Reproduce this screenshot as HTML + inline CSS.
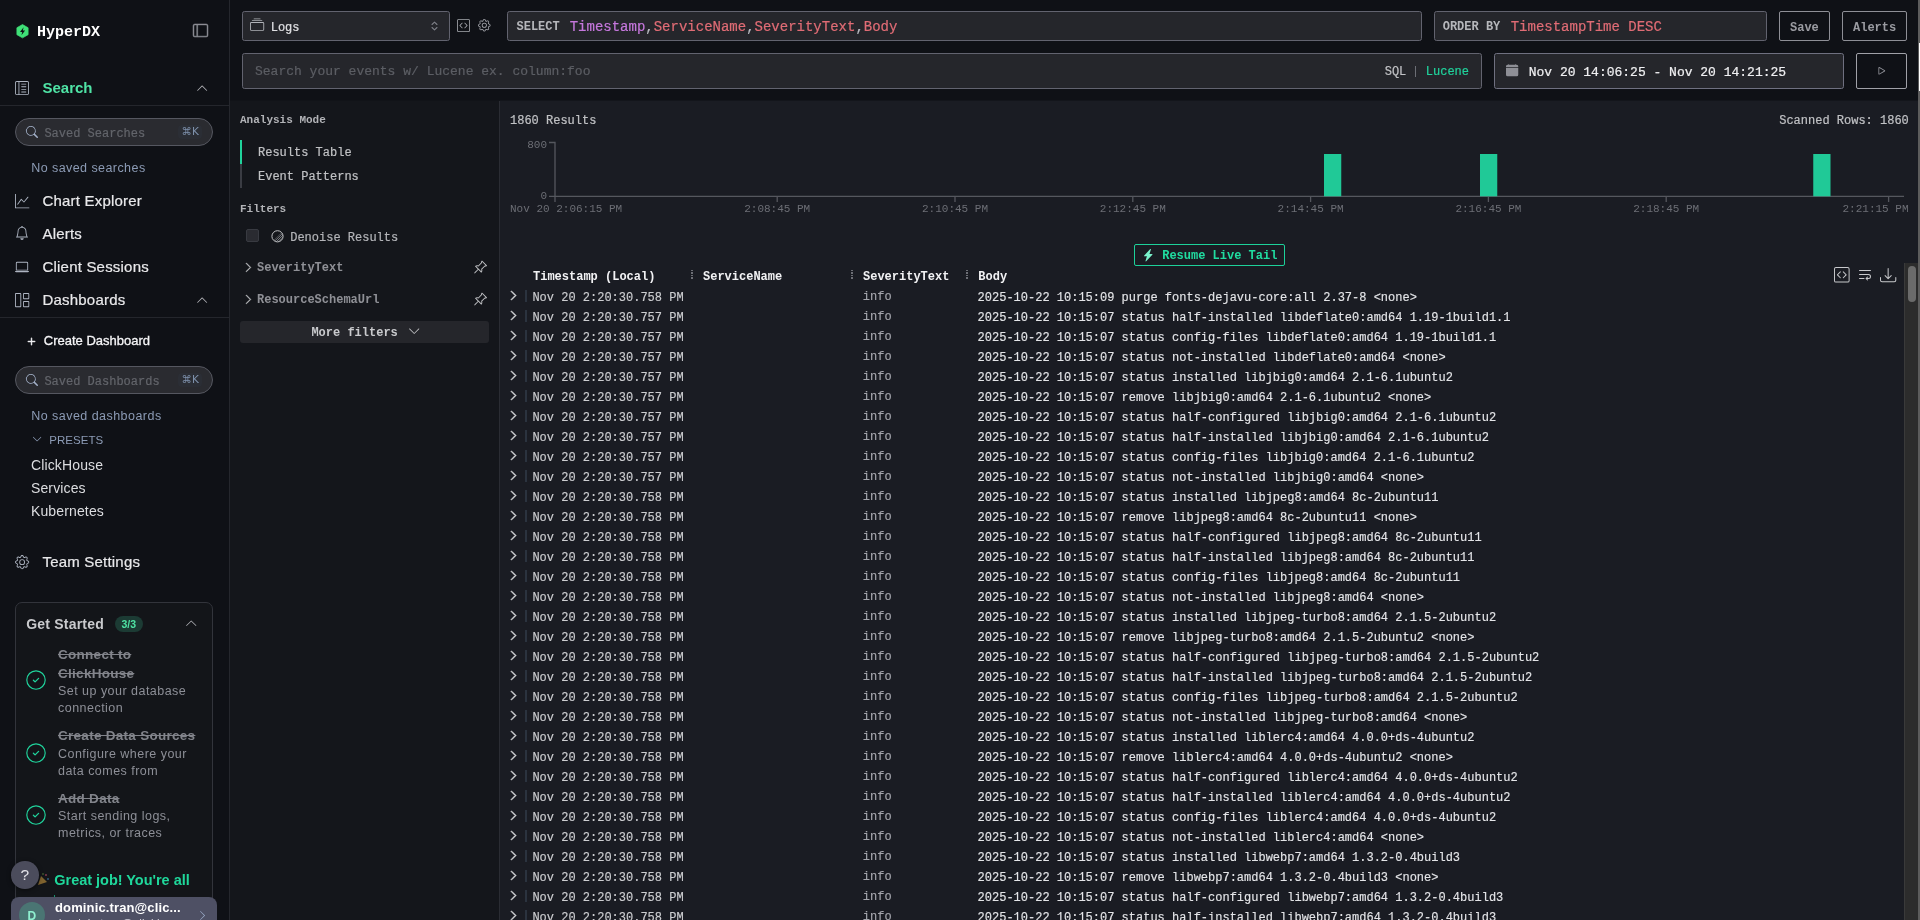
<!DOCTYPE html>
<html lang="en"><head><meta charset="utf-8"><title>HyperDX Search</title>
<style>
html,body{margin:0;padding:0;background:#0f1116;}
body{width:1920px;height:920px;overflow:hidden;position:relative;}
#app{position:absolute;left:0;top:0;width:1920px;height:920px;overflow:hidden;will-change:transform;}
.b,.t,.ic{position:absolute;box-sizing:border-box;}
.t{line-height:1;white-space:pre;}
.m{font-family:"Liberation Mono",monospace;-webkit-text-stroke-width:0.2px;}
.m.bd{-webkit-text-stroke-width:0;}
.s{font-family:"Liberation Sans",sans-serif;}
.bd{font-weight:bold;}
.st{text-decoration:line-through;}
.ic{display:block;overflow:visible;}
.rows{position:absolute;left:500px;top:287px;width:1404px;height:633px;overflow:hidden;font-family:"Liberation Mono",monospace;font-size:12px;line-height:20px;white-space:pre;}
.r{position:absolute;left:0;height:20px;width:1404px;}
.r svg{position:absolute;left:7.6px;top:3.4px;width:11px;height:11px;color:#d4d5d8;stroke:#dcdde0;stroke-width:1.2;color:#dcdde0;}
.r i{position:absolute;left:25px;top:3.4px;width:2px;height:11.5px;background:#2b333f;}
.r span{position:absolute;top:0.6px;}
.c1{left:32.4px;color:#cdced1;-webkit-text-stroke:0.14px #cdced1;}
.c2{left:362.8px;color:#a4a5ac;top:-0.5px !important;-webkit-text-stroke:0.15px #a4a5ac;}
.c3{left:477.6px;color:#e4e5e8;-webkit-text-stroke:0.14px #e4e5e8;}
</style></head>
<body>
<div id="app">
<div class="b" style="left:0px;top:0px;width:1920px;height:920px;background:#0f1116;"></div>
<div class="b" style="left:230px;top:100px;width:270px;height:820px;background:#14161b;"></div>
<div class="b" style="left:500px;top:100px;width:1418px;height:820px;background:#1a1c23;"></div>
<div class="b" style="left:230px;top:100px;width:270px;height:1px;background:#111318;"></div>
<div class="b" style="left:500px;top:100px;width:1418px;height:1px;background:#13151b;"></div>
<div class="b" style="left:499px;top:101px;width:1px;height:819px;background:#2a2c33;"></div>
<div class="b" style="left:229px;top:0px;width:1px;height:920px;background:#25272d;"></div>
<div class="b" style="left:1918px;top:0px;width:2px;height:920px;background:#5c5c5c;"></div>
<div class="b" style="left:1918.7px;top:43px;width:1.3px;height:48px;background:#ffffff;"></div>
<svg class="ic" style="left:15.5px;top:23.6px;width:13px;height:14.7px" viewBox="0 0 14 16"><path d="M7 0.6 L13.1 4.1 L13.1 11.6 L7 15.1 L0.9 11.6 L0.9 4.1 Z" fill="#3fe077" stroke="#3fe077" stroke-width="0.8" stroke-linejoin="round"/><path d="M8.2 3.6 L4.3 8.6 L6.7 8.6 L5.9 12.2 L9.8 7.1 L7.4 7.1 Z" fill="#0f1116"/></svg>
<div class="t m bd" style="left:37px;top:24.75px;font-size:15px;color:#ffffff;">HyperDX</div>
<svg class="ic" style="left:193px;top:23.2px;width:15px;height:15px;color:#8e8f96;stroke:#8e8f96;stroke-width:0.5;" viewBox="0 0 16 16" fill="currentColor"><path d="M0 3a2 2 0 0 1 2-2h12a2 2 0 0 1 2 2v10a2 2 0 0 1-2 2H2a2 2 0 0 1-2-2V3zm5-1v12h9a1 1 0 0 0 1-1V3a1 1 0 0 0-1-1H5zM4 2H2a1 1 0 0 0-1 1v10a1 1 0 0 0 1 1h2V2z"/></svg>
<svg class="ic" style="left:15px;top:81px;width:14px;height:14px;color:#aeb5c2;" viewBox="0 0 16 16" fill="currentColor"><path d="M12.5 3a.5.5 0 0 1 0 1h-5a.5.5 0 0 1 0-1h5zm0 3a.5.5 0 0 1 0 1h-5a.5.5 0 0 1 0-1h5zm.5 3.5a.5.5 0 0 0-.5-.5h-5a.5.5 0 0 0 0 1h5a.5.5 0 0 0 .5-.5zm-.5 2.5a.5.5 0 0 1 0 1h-5a.5.5 0 0 1 0-1h5z"/><path d="M0 2a2 2 0 0 1 2-2h12a2 2 0 0 1 2 2v12a2 2 0 0 1-2 2H2a2 2 0 0 1-2-2V2zM4 1H2a1 1 0 0 0-1 1v12a1 1 0 0 0 1 1h2V1zm1 0v14h9a1 1 0 0 0 1-1V2a1 1 0 0 0-1-1H5z"/></svg>
<div class="t s bd" style="left:42.5px;top:80.40px;font-size:15px;color:#4fe3a5;">Search</div>
<svg class="ic" style="left:195.85px;top:81.9px;width:12.3px;height:12.3px;color:#b0b1b6;" viewBox="0 0 16 16" fill="currentColor"><path fill-rule="evenodd" d="M7.646 4.646a.5.5 0 0 1 .708 0l6 6a.5.5 0 0 1-.708.708L8 5.707l-5.646 5.647a.5.5 0 0 1-.708-.708l6-6z"/></svg>
<div class="b" style="left:0px;top:105px;width:229px;height:1px;background:#24262c;"></div>
<div class="b" style="left:15px;top:118px;width:198px;height:28px;background:#2a2b30;border:1px solid #555760;border-radius:14px;"></div>
<svg class="ic" style="left:25.6px;top:126.2px;width:12px;height:12px;color:#a3b1c9;" viewBox="0 0 16 16" fill="currentColor"><path d="M11.742 10.344a6.5 6.5 0 1 0-1.397 1.398h-.001c.03.04.062.078.098.115l3.85 3.85a1 1 0 0 0 1.415-1.414l-3.85-3.85a1.007 1.007 0 0 0-.115-.1zM12 6.5a5.5 5.5 0 1 1-11 0 5.5 5.5 0 0 1 11 0z"/></svg>
<div class="t m" style="left:44.4px;top:128.00px;font-size:12px;color:#63656b;">Saved Searches</div>
<div class="b" style="left:178px;top:125px;width:24px;height:14px;background:#2b2e35;border-radius:4px;"></div>
<div class="t s" style="left:181.5px;top:126.09px;font-size:11px;color:#7f92ad;font-family:'DejaVu Sans','Liberation Sans',sans-serif;font-size:10.5px;">⌘K</div>
<div class="t s" style="left:31.25px;top:161.62px;font-size:12.5px;color:#8c9bb5;letter-spacing:0.43px;">No saved searches</div>
<svg class="ic" style="left:14.75px;top:193.5px;width:14.3px;height:14.3px;color:#aeb5c2;" viewBox="0 0 16 16" fill="currentColor"><path fill-rule="evenodd" d="M0 0h1v15h15v1H0V0Zm14.817 3.113a.5.5 0 0 1 .07.704l-4.5 5.5a.5.5 0 0 1-.74.037L7.06 6.767l-3.656 5.027a.5.5 0 0 1-.808-.588l4-5.5a.5.5 0 0 1 .758-.06l2.609 2.61 4.15-5.073a.5.5 0 0 1 .704-.07Z"/></svg>
<div class="t s" style="left:42.5px;top:192.90px;font-size:15px;color:#e9e9eb;letter-spacing:0.2px;-webkit-text-stroke:0.2px #e9e9eb;">Chart Explorer</div>
<svg class="ic" style="left:15px;top:226.3px;width:14px;height:14px;color:#aeb5c2;" viewBox="0 0 16 16" fill="currentColor"><path d="M8 16a2 2 0 0 0 2-2H6a2 2 0 0 0 2 2zM8 1.918l-.797.161A4.002 4.002 0 0 0 4 6c0 .628-.134 2.197-.459 3.742-.16.767-.376 1.566-.663 2.258h10.244c-.287-.692-.502-1.49-.663-2.258C12.134 8.197 12 6.628 12 6a4.002 4.002 0 0 0-3.203-3.92L8 1.917zM14.22 12c.223.447.481.801.78 1H1c.299-.199.557-.553.78-1C2.68 10.2 3 6.88 3 6c0-2.42 1.72-4.44 4.005-4.901a1 1 0 1 1 1.99 0A5.002 5.002 0 0 1 13 6c0 .88.32 4.2 1.22 6z"/></svg>
<div class="t s" style="left:42.5px;top:225.90px;font-size:15px;color:#e9e9eb;letter-spacing:0.2px;-webkit-text-stroke:0.2px #e9e9eb;">Alerts</div>
<svg class="ic" style="left:15px;top:260px;width:14px;height:14px;color:#aeb5c2;" viewBox="0 0 16 16" fill="currentColor"><path d="M13.5 3a.5.5 0 0 1 .5.5V11H2V3.5a.5.5 0 0 1 .5-.5h11zm-11-1A1.5 1.5 0 0 0 1 3.5V12h14V3.5A1.5 1.5 0 0 0 13.5 2h-11zM0 12.5h16a1.5 1.5 0 0 1-1.5 1.5h-13A1.5 1.5 0 0 1 0 12.5z"/></svg>
<div class="t s" style="left:42.5px;top:259.05px;font-size:15px;color:#e9e9eb;letter-spacing:0.2px;-webkit-text-stroke:0.2px #e9e9eb;">Client Sessions</div>
<svg class="ic" style="left:15px;top:293px;width:14.25px;height:14.25px;color:#aeb5c2;" viewBox="0 0 16 16" fill="currentColor"><path d="M6 1H1v14h5V1zm9 0h-5v5h5V1zm0 9v5h-5v-5h5zM0 1a1 1 0 0 1 1-1h5a1 1 0 0 1 1 1v14a1 1 0 0 1-1 1H1a1 1 0 0 1-1-1V1zm9 0a1 1 0 0 1 1-1h5a1 1 0 0 1 1 1v5a1 1 0 0 1-1 1h-5a1 1 0 0 1-1-1V1zm1 8a1 1 0 0 0-1 1v5a1 1 0 0 0 1 1h5a1 1 0 0 0 1-1v-5a1 1 0 0 0-1-1h-5z"/></svg>
<div class="t s" style="left:42.5px;top:292.30px;font-size:15px;color:#e9e9eb;letter-spacing:0.2px;-webkit-text-stroke:0.2px #e9e9eb;">Dashboards</div>
<svg class="ic" style="left:195.85px;top:293.9px;width:12.3px;height:12.3px;color:#b0b1b6;" viewBox="0 0 16 16" fill="currentColor"><path fill-rule="evenodd" d="M7.646 4.646a.5.5 0 0 1 .708 0l6 6a.5.5 0 0 1-.708.708L8 5.707l-5.646 5.647a.5.5 0 0 1-.708-.708l6-6z"/></svg>
<div class="b" style="left:0px;top:317px;width:229px;height:1px;background:#24262c;"></div>
<svg class="ic" style="left:24.4px;top:333.9px;width:15px;height:15px;color:#f0f0f2;stroke:#f0f0f2;stroke-width:0.5;" viewBox="0 0 16 16" fill="currentColor"><path d="M8 4a.5.5 0 0 1 .5.5v3h3a.5.5 0 0 1 0 1h-3v3a.5.5 0 0 1-1 0v-3h-3a.5.5 0 0 1 0-1h3v-3A.5.5 0 0 1 8 4z"/></svg>
<div class="t s" style="left:43.75px;top:334.00px;font-size:13px;color:#f5f5f7;letter-spacing:0px;-webkit-text-stroke:0.3px #f5f5f7;">Create Dashboard</div>
<div class="b" style="left:15px;top:366px;width:198px;height:28px;background:#2a2b30;border:1px solid #555760;border-radius:14px;"></div>
<svg class="ic" style="left:25.6px;top:374.2px;width:12px;height:12px;color:#a3b1c9;" viewBox="0 0 16 16" fill="currentColor"><path d="M11.742 10.344a6.5 6.5 0 1 0-1.397 1.398h-.001c.03.04.062.078.098.115l3.85 3.85a1 1 0 0 0 1.415-1.414l-3.85-3.85a1.007 1.007 0 0 0-.115-.1zM12 6.5a5.5 5.5 0 1 1-11 0 5.5 5.5 0 0 1 11 0z"/></svg>
<div class="t m" style="left:44.4px;top:376.00px;font-size:12px;color:#63656b;">Saved Dashboards</div>
<div class="b" style="left:178px;top:373px;width:24px;height:14px;background:#2b2e35;border-radius:4px;"></div>
<div class="t s" style="left:181.5px;top:374.09px;font-size:11px;color:#7f92ad;font-family:'DejaVu Sans','Liberation Sans',sans-serif;font-size:10.5px;">⌘K</div>
<div class="t s" style="left:31.25px;top:409.82px;font-size:12.5px;color:#8c9bb5;letter-spacing:0.46px;">No saved dashboards</div>
<svg class="ic" style="left:31.5px;top:434.2px;width:10.2px;height:10.2px;color:#8c9bb5;" viewBox="0 0 16 16" fill="currentColor"><path fill-rule="evenodd" d="M1.646 4.646a.5.5 0 0 1 .708 0L8 10.293l5.646-5.647a.5.5 0 0 1 .708.708l-6 6a.5.5 0 0 1-.708 0l-6-6a.5.5 0 0 1 0-.708z"/></svg>
<div class="t s" style="left:49.25px;top:434.52px;font-size:11.5px;color:#8c9bb5;letter-spacing:0.05px;">PRESETS</div>
<div class="t s" style="left:30.9px;top:457.65px;font-size:14px;color:#dcdde0;letter-spacing:0.15px;">ClickHouse</div>
<div class="t s" style="left:30.9px;top:480.95px;font-size:14px;color:#dcdde0;letter-spacing:0.15px;">Services</div>
<div class="t s" style="left:30.9px;top:504.45px;font-size:14px;color:#dcdde0;letter-spacing:0.15px;">Kubernetes</div>
<svg class="ic" style="left:15px;top:554.5px;width:14.25px;height:14.25px;color:#aeb5c2;" viewBox="0 0 16 16" fill="currentColor"><path d="M8 4.754a3.246 3.246 0 1 0 0 6.492 3.246 3.246 0 0 0 0-6.492zM5.754 8a2.246 2.246 0 1 1 4.492 0 2.246 2.246 0 0 1-4.492 0z"/><path d="M9.796 1.343c-.527-1.79-3.065-1.79-3.592 0l-.094.319a.873.873 0 0 1-1.255.52l-.292-.16c-1.64-.892-3.433.902-2.54 2.541l.159.292a.873.873 0 0 1-.52 1.255l-.319.094c-1.79.527-1.79 3.065 0 3.592l.319.094a.873.873 0 0 1 .52 1.255l-.16.292c-.892 1.64.901 3.434 2.541 2.54l.292-.159a.873.873 0 0 1 1.255.52l.094.319c.527 1.79 3.065 1.79 3.592 0l.094-.319a.873.873 0 0 1 1.255-.52l.292.16c1.64.893 3.434-.902 2.54-2.541l-.159-.292a.873.873 0 0 1 .52-1.255l.319-.094c1.79-.527 1.79-3.065 0-3.592l-.319-.094a.873.873 0 0 1-.52-1.255l.16-.292c.893-1.64-.902-3.433-2.541-2.54l-.292.159a.873.873 0 0 1-1.255-.52l-.094-.319zm-2.633.283c.246-.835 1.428-.835 1.674 0l.094.319a1.873 1.873 0 0 0 2.693 1.115l.291-.16c.764-.415 1.6.42 1.184 1.185l-.159.292a1.873 1.873 0 0 0 1.116 2.692l.318.094c.835.246.835 1.428 0 1.674l-.319.094a1.873 1.873 0 0 0-1.115 2.693l.16.291c.415.764-.42 1.6-1.185 1.184l-.291-.159a1.873 1.873 0 0 0-2.693 1.116l-.094.318c-.246.835-1.428.835-1.674 0l-.094-.319a1.873 1.873 0 0 0-2.692-1.115l-.292.16c-.764.415-1.6-.42-1.184-1.185l.159-.291A1.873 1.873 0 0 0 1.945 8.93l-.319-.094c-.835-.246-.835-1.428 0-1.674l.319-.094A1.873 1.873 0 0 0 3.06 4.377l-.16-.292c-.415-.764.42-1.6 1.185-1.184l.292.159a1.873 1.873 0 0 0 2.692-1.115l.094-.319z"/></svg>
<div class="t s" style="left:42.5px;top:554.30px;font-size:15px;color:#e9e9eb;letter-spacing:0.2px;-webkit-text-stroke:0.2px #e9e9eb;">Team Settings</div>
<div class="b" style="left:15px;top:602px;width:198px;height:330px;background:#131519;border:1px solid #32343b;border-radius:7px;"></div>
<div class="t s bd" style="left:26.25px;top:617.40px;font-size:14px;color:#c9cacd;letter-spacing:0.2px;">Get Started</div>
<div class="b" style="left:114.5px;top:616.25px;width:28.5px;height:15.75px;background:#1c3b34;border-radius:8px;"></div>
<div class="t s bd" style="left:121.4px;top:619.21px;font-size:10.5px;color:#4fe3a5;">3/3</div>
<svg class="ic" style="left:185px;top:617.3px;width:12.5px;height:12.5px;color:#b0b1b6;" viewBox="0 0 16 16" fill="currentColor"><path fill-rule="evenodd" d="M7.646 4.646a.5.5 0 0 1 .708 0l6 6a.5.5 0 0 1-.708.708L8 5.707l-5.646 5.647a.5.5 0 0 1-.708-.708l6-6z"/></svg>
<svg class="ic" style="left:26px;top:670px;width:20px;height:20px" viewBox="0 0 20 20"><circle cx="10" cy="10" r="9.2" fill="none" stroke="#20d39c" stroke-width="1.15"/><path d="M7.4 10.3 L9.1 11.9 L12.6 8.4" fill="none" stroke="#20d39c" stroke-width="1.3" stroke-linecap="round" stroke-linejoin="round"/></svg>
<div class="t s bd st" style="left:58px;top:647.92px;font-size:13.5px;color:#82848b;letter-spacing:0.28px;">Connect to</div>
<div class="t s bd st" style="left:58px;top:666.67px;font-size:13.5px;color:#82848b;letter-spacing:0.28px;">ClickHouse</div>
<div class="t s" style="left:58px;top:684.62px;font-size:12.5px;color:#8d8f97;letter-spacing:0.47px;">Set up your database</div>
<div class="t s" style="left:58px;top:701.62px;font-size:12.5px;color:#8d8f97;letter-spacing:0.47px;">connection</div>
<svg class="ic" style="left:26px;top:742.5px;width:20px;height:20px" viewBox="0 0 20 20"><circle cx="10" cy="10" r="9.2" fill="none" stroke="#20d39c" stroke-width="1.15"/><path d="M7.4 10.3 L9.1 11.9 L12.6 8.4" fill="none" stroke="#20d39c" stroke-width="1.3" stroke-linecap="round" stroke-linejoin="round"/></svg>
<div class="t s bd st" style="left:58px;top:729.42px;font-size:13.5px;color:#82848b;letter-spacing:0.28px;">Create Data Sources</div>
<div class="t s" style="left:58px;top:747.62px;font-size:12.5px;color:#8d8f97;letter-spacing:0.47px;">Configure where your</div>
<div class="t s" style="left:58px;top:764.62px;font-size:12.5px;color:#8d8f97;letter-spacing:0.47px;">data comes from</div>
<svg class="ic" style="left:26px;top:805px;width:20px;height:20px" viewBox="0 0 20 20"><circle cx="10" cy="10" r="9.2" fill="none" stroke="#20d39c" stroke-width="1.15"/><path d="M7.4 10.3 L9.1 11.9 L12.6 8.4" fill="none" stroke="#20d39c" stroke-width="1.3" stroke-linecap="round" stroke-linejoin="round"/></svg>
<div class="t s bd st" style="left:58px;top:791.67px;font-size:13.5px;color:#82848b;letter-spacing:0.28px;">Add Data</div>
<div class="t s" style="left:58px;top:810.12px;font-size:12.5px;color:#8d8f97;letter-spacing:0.47px;">Start sending logs,</div>
<div class="t s" style="left:58px;top:827.12px;font-size:12.5px;color:#8d8f97;letter-spacing:0.47px;">metrics, or traces</div>
<svg class="ic" style="left:36px;top:872px;width:14px;height:14px;opacity:0.55" viewBox="0 0 14 14"><path d="M2 13 L5 4 L11 10 Z" fill="#d9a441"/><circle cx="10" cy="3" r="1" fill="#e0567a"/><circle cx="12" cy="7" r="0.9" fill="#4aa3e0"/><circle cx="7" cy="2" r="0.8" fill="#8bd450"/></svg>
<div class="t s bd" style="left:54.25px;top:873.43px;font-size:14.5px;color:#1fd79b;letter-spacing:-0.02px;">Great job! You&#x27;re all</div>
<div class="b" style="left:54px;top:895px;width:1px;height:2px;background:#178f6c;"></div>
<div class="b" style="left:11.25px;top:861.25px;width:27.5px;height:27.5px;background:#4b4c5c;border-radius:50%;box-shadow:0 1px 4px rgba(0,0,0,.5);"></div>
<div class="t s" style="left:20.6px;top:867.48px;font-size:15.5px;color:#e4e4ea;">?</div>
<div class="b" style="left:10.75px;top:897px;width:206px;height:40px;background:#4e5064;border-radius:8px;"></div>
<div class="b" style="left:18.75px;top:902px;width:26.25px;height:26.25px;background:#4a7573;border-radius:50%;"></div>
<div class="t s bd" style="left:27.6px;top:909.84px;font-size:12px;color:#8ff0d0;">D</div>
<div class="t s bd" style="left:55px;top:901.20px;font-size:13px;color:#ffffff;letter-spacing:0.13px;">dominic.tran@clic...</div>
<div class="t s" style="left:55px;top:917.77px;font-size:11.5px;color:#d0d1da;letter-spacing:0.3px;">dominic.tran@clickho...</div>
<svg class="ic" style="left:196.5px;top:909.5px;width:11px;height:11px;color:#9fb0cf;" viewBox="0 0 16 16" fill="currentColor"><path fill-rule="evenodd" d="M4.646 1.646a.5.5 0 0 1 .708 0l6 6a.5.5 0 0 1 0 .708l-6 6a.5.5 0 0 1-.708-.708L10.293 8 4.646 2.354a.5.5 0 0 1 0-.708z"/></svg>
<div class="b" style="left:242px;top:11px;width:208px;height:30px;background:#25262b;border:1px solid #62636f;border-radius:2.5px;"></div>
<svg class="ic" style="left:249.8px;top:18.3px;width:14.2px;height:14.2px;color:#b0b2b8;" viewBox="0 0 16 16" fill="currentColor"><path d="M2.5 3.5a.5.5 0 0 1 0-1h11a.5.5 0 0 1 0 1h-11zm2-2a.5.5 0 0 1 0-1h7a.5.5 0 0 1 0 1h-7zM0 13a1.5 1.5 0 0 0 1.5 1.5h13A1.5 1.5 0 0 0 16 13V6a1.5 1.5 0 0 0-1.5-1.5h-13A1.5 1.5 0 0 0 0 6v7zm1.5.5A.5.5 0 0 1 1 13V6a.5.5 0 0 1 .5-.5h13a.5.5 0 0 1 .5.5v7a.5.5 0 0 1-.5.5h-13z"/></svg>
<div class="t m" style="left:270.7px;top:21.70px;font-size:12px;color:#e0e0e3;">Logs</div>
<svg class="ic" style="left:430px;top:20px;width:9px;height:12px" viewBox="0 0 9 12"><path d="M2 4.5 L4.5 2.2 L7 4.5 M2 7.5 L4.5 9.8 L7 7.5" fill="none" stroke="#7d7f87" stroke-width="1.1" stroke-linecap="round" stroke-linejoin="round"/></svg>
<svg class="ic" style="left:457px;top:19px;width:13px;height:13px;color:#a8aab0;" viewBox="0 0 16 16" fill="currentColor"><path d="M14 1a1 1 0 0 1 1 1v12a1 1 0 0 1-1 1H2a1 1 0 0 1-1-1V2a1 1 0 0 1 1-1h12zM2 0a2 2 0 0 0-2 2v12a2 2 0 0 0 2 2h12a2 2 0 0 0 2-2V2a2 2 0 0 0-2-2H2z"/><path d="M6.854 4.646a.5.5 0 0 1 0 .708L4.207 8l2.647 2.646a.5.5 0 0 1-.708.708l-3-3a.5.5 0 0 1 0-.708l3-3a.5.5 0 0 1 .708 0zm2.292 0a.5.5 0 0 0 0 .708L11.793 8l-2.647 2.646a.5.5 0 0 0 .708.708l3-3a.5.5 0 0 0 0-.708l-3-3a.5.5 0 0 0-.708 0z"/></svg>
<svg class="ic" style="left:478.4px;top:19.2px;width:12.6px;height:12.6px;color:#a8aab0;" viewBox="0 0 16 16" fill="currentColor"><path d="M8 4.754a3.246 3.246 0 1 0 0 6.492 3.246 3.246 0 0 0 0-6.492zM5.754 8a2.246 2.246 0 1 1 4.492 0 2.246 2.246 0 0 1-4.492 0z"/><path d="M9.796 1.343c-.527-1.79-3.065-1.79-3.592 0l-.094.319a.873.873 0 0 1-1.255.52l-.292-.16c-1.64-.892-3.433.902-2.54 2.541l.159.292a.873.873 0 0 1-.52 1.255l-.319.094c-1.79.527-1.79 3.065 0 3.592l.319.094a.873.873 0 0 1 .52 1.255l-.16.292c-.892 1.64.901 3.434 2.541 2.54l.292-.159a.873.873 0 0 1 1.255.52l.094.319c.527 1.79 3.065 1.79 3.592 0l.094-.319a.873.873 0 0 1 1.255-.52l.292.16c1.64.893 3.434-.902 2.54-2.541l-.159-.292a.873.873 0 0 1 .52-1.255l.319-.094c1.79-.527 1.79-3.065 0-3.592l-.319-.094a.873.873 0 0 1-.52-1.255l.16-.292c.893-1.64-.902-3.433-2.541-2.54l-.292.159a.873.873 0 0 1-1.255-.52l-.094-.319zm-2.633.283c.246-.835 1.428-.835 1.674 0l.094.319a1.873 1.873 0 0 0 2.693 1.115l.291-.16c.764-.415 1.6.42 1.184 1.185l-.159.292a1.873 1.873 0 0 0 1.116 2.692l.318.094c.835.246.835 1.428 0 1.674l-.319.094a1.873 1.873 0 0 0-1.115 2.693l.16.291c.415.764-.42 1.6-1.185 1.184l-.291-.159a1.873 1.873 0 0 0-2.693 1.116l-.094.318c-.246.835-1.428.835-1.674 0l-.094-.319a1.873 1.873 0 0 0-2.692-1.115l-.292.16c-.764.415-1.6-.42-1.184-1.185l.159-.291A1.873 1.873 0 0 0 1.945 8.93l-.319-.094c-.835-.246-.835-1.428 0-1.674l.319-.094A1.873 1.873 0 0 0 3.06 4.377l-.16-.292c-.415-.764.42-1.6 1.185-1.184l.292.159a1.873 1.873 0 0 0 2.692-1.115l.094-.319z"/></svg>
<div class="b" style="left:507px;top:11px;width:915px;height:30px;background:#25262b;border:1px solid #62636f;border-radius:2.5px;"></div>
<div class="t m bd" style="left:516.5px;top:21.10px;font-size:12px;color:#b6b7bb;">SELECT</div>
<div class="t m" style="left:569.7px;top:19.56px;font-size:14px;"><span style="color:#c678dd">Timestamp</span><span style="color:#b9bbc2">,</span><span style="color:#e06c75">ServiceName</span><span style="color:#b9bbc2">,</span><span style="color:#e06c75">SeverityText</span><span style="color:#b9bbc2">,</span><span style="color:#e06c75">Body</span></div>
<div class="b" style="left:1434px;top:11px;width:333px;height:30px;background:#25262b;border:1px solid #62636f;border-radius:2.5px;"></div>
<div class="t m bd" style="left:1442.7px;top:21.10px;font-size:12px;color:#b6b7bb;">ORDER BY</div>
<div class="t m" style="left:1510.7px;top:19.56px;font-size:14px;color:#e06c75;">TimestampTime DESC</div>
<div class="b" style="left:1779px;top:11px;width:51px;height:30px;background:#0f1116;border:1px solid #8e8f96;border-radius:2px;"></div>
<div class="t m bd" style="left:1790px;top:22.10px;font-size:12px;color:#9a9ba1;">Save</div>
<div class="b" style="left:1842px;top:11px;width:65px;height:30px;background:#0f1116;border:1px solid #8e8f96;border-radius:2px;"></div>
<div class="t m bd" style="left:1853px;top:22.10px;font-size:12px;color:#9a9ba1;">Alerts</div>
<div class="b" style="left:242px;top:53px;width:1240px;height:36px;background:#25262b;border:1px solid #62636f;border-radius:2.5px;"></div>
<div class="t m" style="left:255px;top:64.73px;font-size:13px;color:#5c5e64;">Search your events w/ Lucene ex. column:foo</div>
<div class="t m" style="left:1384.7px;top:66.00px;font-size:12px;color:#c1c2c5;">SQL</div>
<div class="b" style="left:1415.3px;top:65.5px;width:1.2px;height:11.2px;background:#6c6e75;"></div>
<div class="t m" style="left:1425.8px;top:66.00px;font-size:12px;color:#20d39c;">Lucene</div>
<div class="b" style="left:1494px;top:53px;width:350px;height:36px;background:#25262b;border:1px solid #6f7080;border-radius:2.5px;"></div>
<svg class="ic" style="left:1505.75px;top:64.2px;width:12.25px;height:12.25px;color:#8e8f96;" viewBox="0 0 16 16" fill="currentColor"><path d="M3.5 0a.5.5 0 0 1 .5.5V1h8V.5a.5.5 0 0 1 1 0V1h1a2 2 0 0 1 2 2v11a2 2 0 0 1-2 2H2a2 2 0 0 1-2-2V5h16V4H0V3a2 2 0 0 1 2-2h1V.5a.5.5 0 0 1 .5-.5z"/></svg>
<div class="t m" style="left:1528.7px;top:65.63px;font-size:13px;color:#f0f0f2;">Nov 20 14:06:25 - Nov 20 14:21:25</div>
<div class="b" style="left:1856px;top:53px;width:51px;height:36px;background:#0f1116;border:1px solid #a0a1a8;border-radius:2px;"></div>
<svg class="ic" style="left:1874.6px;top:64.4px;width:13.6px;height:13.6px;color:#8e8f96;" viewBox="0 0 16 16" fill="currentColor"><path d="M10.804 8 5 4.633v6.734L10.804 8zm.792-.696a.802.802 0 0 1 0 1.392l-6.363 3.692C4.713 12.69 4 12.345 4 11.692V4.308c0-.653.713-.998 1.233-.696l6.363 3.692z"/></svg>
<div class="t m bd" style="left:240px;top:114.86px;font-size:11px;color:#b2b3b7;">Analysis Mode</div>
<div class="b" style="left:240px;top:140px;width:2px;height:48px;background:#3a3c43;"></div>
<div class="b" style="left:240px;top:140px;width:2px;height:24px;background:#20d39c;"></div>
<div class="t m" style="left:258px;top:146.70px;font-size:12px;color:#c1c2c5;">Results Table</div>
<div class="t m" style="left:258px;top:170.70px;font-size:12px;color:#c1c2c5;">Event Patterns</div>
<div class="t m bd" style="left:240px;top:204.16px;font-size:11px;color:#b2b3b7;">Filters</div>
<div class="b" style="left:246px;top:229px;width:13px;height:13px;background:#2a2b31;border:1px solid #383a41;border-radius:2px;"></div>
<svg class="ic" style="left:270.5px;top:230px;width:13px;height:13px" viewBox="0 0 13 13"><defs><clipPath id="dn"><path d="M2.5 10.3 L10.5 2.3 A5.6 5.6 0 0 1 2.5 10.3 Z"/></clipPath></defs><circle cx="6.5" cy="6.3" r="5.6" fill="none" stroke="#c1c2c5" stroke-width="1"/><g clip-path="url(#dn)" stroke="#b0b1b6" stroke-width="0.7"><path d="M1 11.5 L11.5 1 M2.5 12.3 L12.3 2.5 M4 13.1 L13.1 4 M5.5 13.9 L13.9 5.5 M7 14.7 L14.7 7 M8.5 15.5 L15.5 8.5"/></g></svg>
<div class="t m" style="left:290.2px;top:231.70px;font-size:12px;color:#b4b5b9;">Denoise Results</div>
<svg class="ic" style="left:242.7px;top:262.0px;width:10.8px;height:10.8px;color:#c1c2c5;stroke:#c1c2c5;stroke-width:0.7;" viewBox="0 0 16 16" fill="currentColor"><path fill-rule="evenodd" d="M4.646 1.646a.5.5 0 0 1 .708 0l6 6a.5.5 0 0 1 0 .708l-6 6a.5.5 0 0 1-.708-.708L10.293 8 4.646 2.354a.5.5 0 0 1 0-.708z"/></svg>
<div class="t m bd" style="left:257px;top:262.30px;font-size:12px;color:#8f9096;">SeverityText</div>
<svg class="ic" style="left:472.9px;top:260.1px;width:14.6px;height:14.6px;color:#c1c2c5;" viewBox="0 0 16 16" fill="currentColor"><path d="M9.828.722a.5.5 0 0 1 .354.146l4.95 4.95a.5.5 0 0 1 0 .707c-.48.48-1.072.588-1.503.588-.177 0-.335-.018-.46-.039l-3.134 3.134a5.927 5.927 0 0 1 .16 1.013c.046.702-.032 1.687-.72 2.375a.5.5 0 0 1-.707 0l-2.829-2.828-3.182 3.182c-.195.195-1.219.902-1.414.707-.195-.195.512-1.22.707-1.414l3.182-3.182-2.828-2.829a.5.5 0 0 1 0-.707c.688-.688 1.673-.767 2.375-.72a5.922 5.922 0 0 1 1.013.16l3.134-3.133a2.772 2.772 0 0 1-.04-.461c0-.43.108-1.022.589-1.503a.5.5 0 0 1 .353-.146zm.122 2.112v-.002.002zm0-.002v.002a.5.5 0 0 1-.122.51L6.293 6.878a.5.5 0 0 1-.511.12H5.78l-.014-.004a4.507 4.507 0 0 0-.288-.076 4.922 4.922 0 0 0-.765-.116c-.422-.028-.836.008-1.175.15l5.51 5.509c.141-.34.177-.753.149-1.175a4.924 4.924 0 0 0-.192-1.054l-.004-.013v-.001a.5.5 0 0 1 .12-.512l3.536-3.535a.5.5 0 0 1 .532-.115l.096.022c.087.017.208.034.344.034.114 0 .23-.011.343-.04L9.927 2.028c-.029.113-.04.23-.04.343a1.779 1.779 0 0 0 .062.46z"/></svg>
<svg class="ic" style="left:242.7px;top:294.1px;width:10.8px;height:10.8px;color:#c1c2c5;stroke:#c1c2c5;stroke-width:0.7;" viewBox="0 0 16 16" fill="currentColor"><path fill-rule="evenodd" d="M4.646 1.646a.5.5 0 0 1 .708 0l6 6a.5.5 0 0 1 0 .708l-6 6a.5.5 0 0 1-.708-.708L10.293 8 4.646 2.354a.5.5 0 0 1 0-.708z"/></svg>
<div class="t m bd" style="left:257px;top:294.40px;font-size:12px;color:#8f9096;">ResourceSchemaUrl</div>
<svg class="ic" style="left:472.9px;top:292.20000000000005px;width:14.6px;height:14.6px;color:#c1c2c5;" viewBox="0 0 16 16" fill="currentColor"><path d="M9.828.722a.5.5 0 0 1 .354.146l4.95 4.95a.5.5 0 0 1 0 .707c-.48.48-1.072.588-1.503.588-.177 0-.335-.018-.46-.039l-3.134 3.134a5.927 5.927 0 0 1 .16 1.013c.046.702-.032 1.687-.72 2.375a.5.5 0 0 1-.707 0l-2.829-2.828-3.182 3.182c-.195.195-1.219.902-1.414.707-.195-.195.512-1.22.707-1.414l3.182-3.182-2.828-2.829a.5.5 0 0 1 0-.707c.688-.688 1.673-.767 2.375-.72a5.922 5.922 0 0 1 1.013.16l3.134-3.133a2.772 2.772 0 0 1-.04-.461c0-.43.108-1.022.589-1.503a.5.5 0 0 1 .353-.146zm.122 2.112v-.002.002zm0-.002v.002a.5.5 0 0 1-.122.51L6.293 6.878a.5.5 0 0 1-.511.12H5.78l-.014-.004a4.507 4.507 0 0 0-.288-.076 4.922 4.922 0 0 0-.765-.116c-.422-.028-.836.008-1.175.15l5.51 5.509c.141-.34.177-.753.149-1.175a4.924 4.924 0 0 0-.192-1.054l-.004-.013v-.001a.5.5 0 0 1 .12-.512l3.536-3.535a.5.5 0 0 1 .532-.115l.096.022c.087.017.208.034.344.034.114 0 .23-.011.343-.04L9.927 2.028c-.029.113-.04.23-.04.343a1.779 1.779 0 0 0 .062.46z"/></svg>
<div class="b" style="left:240px;top:321px;width:249px;height:22px;background:#25262b;border-radius:3px;"></div>
<div class="t m bd" style="left:311.4px;top:326.90px;font-size:12px;color:#c9cacd;">More filters</div>
<svg class="ic" style="left:407.8px;top:325.4px;width:12.4px;height:12.4px;color:#c1c2c5;" viewBox="0 0 16 16" fill="currentColor"><path fill-rule="evenodd" d="M1.646 4.646a.5.5 0 0 1 .708 0L8 10.293l5.646-5.647a.5.5 0 0 1 .708.708l-6 6a.5.5 0 0 1-.708 0l-6-6a.5.5 0 0 1 0-.708z"/></svg>
<div class="t m" style="left:510px;top:115.10px;font-size:12px;color:#c1c2c5;">1860 Results</div>
<div class="t m" style="left:1779.2px;top:115.10px;font-size:12px;color:#c1c2c5;">Scanned Rows: 1860</div>
<svg class="ic" style="left:500px;top:130px;width:1418px;height:95px" viewBox="500 130 1418 95" font-family="'Liberation Mono',monospace" font-size="11" fill="#6c6e75"><path d="M549 142.5 H555 V202 M549 196.3 H1904" fill="none" stroke="#55575e" stroke-width="1.3"/><path d="M777.2 196.3 V202" stroke="#55575e" stroke-width="1.3"/><path d="M955 196.3 V202" stroke="#55575e" stroke-width="1.3"/><path d="M1132.8 196.3 V202" stroke="#55575e" stroke-width="1.3"/><path d="M1310.6 196.3 V202" stroke="#55575e" stroke-width="1.3"/><path d="M1488.4 196.3 V202" stroke="#55575e" stroke-width="1.3"/><path d="M1666.2 196.3 V202" stroke="#55575e" stroke-width="1.3"/><path d="M1888.6 196.3 V202" stroke="#55575e" stroke-width="1.3"/><rect x="1324" y="154" width="17.25" height="42.3" fill="#20c997"/><rect x="1480" y="154" width="17.25" height="42.3" fill="#20c997"/><rect x="1813.25" y="154" width="17.25" height="42.3" fill="#20c997"/><text x="547" y="148.3" text-anchor="end">800</text><text x="547" y="199.3" text-anchor="end">0</text><text x="510" y="211.5">Nov 20 2:06:15 PM</text><text x="777.2" y="211.5" text-anchor="middle">2:08:45 PM</text><text x="955" y="211.5" text-anchor="middle">2:10:45 PM</text><text x="1132.8" y="211.5" text-anchor="middle">2:12:45 PM</text><text x="1310.6" y="211.5" text-anchor="middle">2:14:45 PM</text><text x="1488.4" y="211.5" text-anchor="middle">2:16:45 PM</text><text x="1666.2" y="211.5" text-anchor="middle">2:18:45 PM</text><text x="1908.5" y="211.5" text-anchor="end">2:21:15 PM</text></svg>
<div class="b" style="left:1134px;top:244px;width:151px;height:22px;border:1px solid #1dd19a;border-radius:2px;"></div>
<svg class="ic" style="left:1141.9px;top:248.8px;width:12.4px;height:12.4px;color:#7af3cc;" viewBox="0 0 16 16" fill="currentColor"><path d="M11.251.068a.5.5 0 0 1 .227.58L9.677 6.5H13a.5.5 0 0 1 .364.843l-8 8.5a.5.5 0 0 1-.842-.49L6.323 9.5H3a.5.5 0 0 1-.364-.843l8-8.5a.5.5 0 0 1 .615-.09z"/></svg>
<div class="t m bd" style="left:1162.2px;top:250.30px;font-size:12px;color:#20dca0;">Resume Live Tail</div>
<div class="t m bd" style="left:533px;top:270.55px;font-size:12px;color:#f2f2f4;">Timestamp (Local)</div>
<div class="t m bd" style="left:703px;top:270.55px;font-size:12px;color:#f2f2f4;">ServiceName</div>
<div class="t m bd" style="left:863px;top:270.55px;font-size:12px;color:#f2f2f4;">SeverityText</div>
<div class="t m bd" style="left:978.3px;top:270.55px;font-size:12px;color:#f2f2f4;">Body</div>
<div class="b" style="left:691.3px;top:269.6px;width:2px;height:1.4px;background:#6c6e75;"></div>
<div class="b" style="left:691.3px;top:272.20000000000005px;width:2px;height:1.4px;background:#6c6e75;"></div>
<div class="b" style="left:691.3px;top:274.8px;width:2px;height:1.4px;background:#6c6e75;"></div>
<div class="b" style="left:691.3px;top:277.40000000000003px;width:2px;height:1.4px;background:#6c6e75;"></div>
<div class="b" style="left:851.3px;top:269.6px;width:2px;height:1.4px;background:#6c6e75;"></div>
<div class="b" style="left:851.3px;top:272.20000000000005px;width:2px;height:1.4px;background:#6c6e75;"></div>
<div class="b" style="left:851.3px;top:274.8px;width:2px;height:1.4px;background:#6c6e75;"></div>
<div class="b" style="left:851.3px;top:277.40000000000003px;width:2px;height:1.4px;background:#6c6e75;"></div>
<div class="b" style="left:966.3px;top:269.6px;width:2px;height:1.4px;background:#6c6e75;"></div>
<div class="b" style="left:966.3px;top:272.20000000000005px;width:2px;height:1.4px;background:#6c6e75;"></div>
<div class="b" style="left:966.3px;top:274.8px;width:2px;height:1.4px;background:#6c6e75;"></div>
<div class="b" style="left:966.3px;top:277.40000000000003px;width:2px;height:1.4px;background:#6c6e75;"></div>
<svg class="ic" style="left:1833.75px;top:267px;width:15.6px;height:15.6px;color:#c8c9cc;" viewBox="0 0 16 16" fill="currentColor"><path d="M14 1a1 1 0 0 1 1 1v12a1 1 0 0 1-1 1H2a1 1 0 0 1-1-1V2a1 1 0 0 1 1-1h12zM2 0a2 2 0 0 0-2 2v12a2 2 0 0 0 2 2h12a2 2 0 0 0 2-2V2a2 2 0 0 0-2-2H2z"/><path d="M6.854 4.646a.5.5 0 0 1 0 .708L4.207 8l2.647 2.646a.5.5 0 0 1-.708.708l-3-3a.5.5 0 0 1 0-.708l3-3a.5.5 0 0 1 .708 0zm2.292 0a.5.5 0 0 0 0 .708L11.793 8l-2.647 2.646a.5.5 0 0 0 .708.708l3-3a.5.5 0 0 0 0-.708l-3-3a.5.5 0 0 0-.708 0z"/></svg>
<svg class="ic" style="left:1856.8px;top:267px;width:16px;height:16px;color:#c8c9cc;" viewBox="0 0 16 16" fill="currentColor"><path fill-rule="evenodd" d="M2 3.5a.5.5 0 0 1 .5-.5h11a.5.5 0 0 1 0 1h-11a.5.5 0 0 1-.5-.5zm0 4a.5.5 0 0 1 .5-.5h9a2.5 2.5 0 0 1 0 5h-1.293l.647.646a.5.5 0 0 1-.708.708l-1.5-1.5a.5.5 0 0 1 0-.708l1.5-1.5a.5.5 0 0 1 .708.708l-.647.646H11.5a1.5 1.5 0 0 0 0-3h-9a.5.5 0 0 1-.5-.5zm0 4a.5.5 0 0 1 .5-.5H7a.5.5 0 0 1 0 1H2.5a.5.5 0 0 1-.5-.5z"/></svg>
<svg class="ic" style="left:1880px;top:266.5px;width:16.3px;height:16.3px;color:#c8c9cc;" viewBox="0 0 16 16" fill="currentColor"><path d="M.5 9.9a.5.5 0 0 1 .5.5v2.5a1 1 0 0 0 1 1h12a1 1 0 0 0 1-1v-2.5a.5.5 0 0 1 1 0v2.5a2 2 0 0 1-2 2H2a2 2 0 0 1-2-2v-2.5a.5.5 0 0 1 .5-.5z"/><path d="M7.646 11.854a.5.5 0 0 0 .708 0l3-3a.5.5 0 0 0-.708-.708L8.5 10.293V1.5a.5.5 0 0 0-1 0v8.793L5.354 8.146a.5.5 0 1 0-.708.708l3 3z"/></svg>
<div class="b" style="left:1904px;top:263px;width:14px;height:657px;background:#2c2c2c;border-left:1px solid #3a3a3a;"></div>
<div class="b" style="left:1908px;top:266px;width:8.3px;height:36px;background:#6b6b6b;border-radius:4.2px;"></div>
<div class="rows"><div class="r" style="top:0px"><svg viewBox="0 0 16 16" fill="currentColor"><path fill-rule="evenodd" d="M4.646 1.646a.5.5 0 0 1 .708 0l6 6a.5.5 0 0 1 0 .708l-6 6a.5.5 0 0 1-.708-.708L10.293 8 4.646 2.354a.5.5 0 0 1 0-.708z"/></svg><i></i><span class="c1">Nov 20 2:20:30.758 PM</span><span class="c2">info</span><span class="c3">2025-10-22 10:15:09 purge fonts-dejavu-core:all 2.37-8 &lt;none&gt;</span></div><div class="r" style="top:20px"><svg viewBox="0 0 16 16" fill="currentColor"><path fill-rule="evenodd" d="M4.646 1.646a.5.5 0 0 1 .708 0l6 6a.5.5 0 0 1 0 .708l-6 6a.5.5 0 0 1-.708-.708L10.293 8 4.646 2.354a.5.5 0 0 1 0-.708z"/></svg><i></i><span class="c1">Nov 20 2:20:30.757 PM</span><span class="c2">info</span><span class="c3">2025-10-22 10:15:07 status half-installed libdeflate0:amd64 1.19-1build1.1</span></div><div class="r" style="top:40px"><svg viewBox="0 0 16 16" fill="currentColor"><path fill-rule="evenodd" d="M4.646 1.646a.5.5 0 0 1 .708 0l6 6a.5.5 0 0 1 0 .708l-6 6a.5.5 0 0 1-.708-.708L10.293 8 4.646 2.354a.5.5 0 0 1 0-.708z"/></svg><i></i><span class="c1">Nov 20 2:20:30.757 PM</span><span class="c2">info</span><span class="c3">2025-10-22 10:15:07 status config-files libdeflate0:amd64 1.19-1build1.1</span></div><div class="r" style="top:60px"><svg viewBox="0 0 16 16" fill="currentColor"><path fill-rule="evenodd" d="M4.646 1.646a.5.5 0 0 1 .708 0l6 6a.5.5 0 0 1 0 .708l-6 6a.5.5 0 0 1-.708-.708L10.293 8 4.646 2.354a.5.5 0 0 1 0-.708z"/></svg><i></i><span class="c1">Nov 20 2:20:30.757 PM</span><span class="c2">info</span><span class="c3">2025-10-22 10:15:07 status not-installed libdeflate0:amd64 &lt;none&gt;</span></div><div class="r" style="top:80px"><svg viewBox="0 0 16 16" fill="currentColor"><path fill-rule="evenodd" d="M4.646 1.646a.5.5 0 0 1 .708 0l6 6a.5.5 0 0 1 0 .708l-6 6a.5.5 0 0 1-.708-.708L10.293 8 4.646 2.354a.5.5 0 0 1 0-.708z"/></svg><i></i><span class="c1">Nov 20 2:20:30.757 PM</span><span class="c2">info</span><span class="c3">2025-10-22 10:15:07 status installed libjbig0:amd64 2.1-6.1ubuntu2</span></div><div class="r" style="top:100px"><svg viewBox="0 0 16 16" fill="currentColor"><path fill-rule="evenodd" d="M4.646 1.646a.5.5 0 0 1 .708 0l6 6a.5.5 0 0 1 0 .708l-6 6a.5.5 0 0 1-.708-.708L10.293 8 4.646 2.354a.5.5 0 0 1 0-.708z"/></svg><i></i><span class="c1">Nov 20 2:20:30.757 PM</span><span class="c2">info</span><span class="c3">2025-10-22 10:15:07 remove libjbig0:amd64 2.1-6.1ubuntu2 &lt;none&gt;</span></div><div class="r" style="top:120px"><svg viewBox="0 0 16 16" fill="currentColor"><path fill-rule="evenodd" d="M4.646 1.646a.5.5 0 0 1 .708 0l6 6a.5.5 0 0 1 0 .708l-6 6a.5.5 0 0 1-.708-.708L10.293 8 4.646 2.354a.5.5 0 0 1 0-.708z"/></svg><i></i><span class="c1">Nov 20 2:20:30.757 PM</span><span class="c2">info</span><span class="c3">2025-10-22 10:15:07 status half-configured libjbig0:amd64 2.1-6.1ubuntu2</span></div><div class="r" style="top:140px"><svg viewBox="0 0 16 16" fill="currentColor"><path fill-rule="evenodd" d="M4.646 1.646a.5.5 0 0 1 .708 0l6 6a.5.5 0 0 1 0 .708l-6 6a.5.5 0 0 1-.708-.708L10.293 8 4.646 2.354a.5.5 0 0 1 0-.708z"/></svg><i></i><span class="c1">Nov 20 2:20:30.757 PM</span><span class="c2">info</span><span class="c3">2025-10-22 10:15:07 status half-installed libjbig0:amd64 2.1-6.1ubuntu2</span></div><div class="r" style="top:160px"><svg viewBox="0 0 16 16" fill="currentColor"><path fill-rule="evenodd" d="M4.646 1.646a.5.5 0 0 1 .708 0l6 6a.5.5 0 0 1 0 .708l-6 6a.5.5 0 0 1-.708-.708L10.293 8 4.646 2.354a.5.5 0 0 1 0-.708z"/></svg><i></i><span class="c1">Nov 20 2:20:30.757 PM</span><span class="c2">info</span><span class="c3">2025-10-22 10:15:07 status config-files libjbig0:amd64 2.1-6.1ubuntu2</span></div><div class="r" style="top:180px"><svg viewBox="0 0 16 16" fill="currentColor"><path fill-rule="evenodd" d="M4.646 1.646a.5.5 0 0 1 .708 0l6 6a.5.5 0 0 1 0 .708l-6 6a.5.5 0 0 1-.708-.708L10.293 8 4.646 2.354a.5.5 0 0 1 0-.708z"/></svg><i></i><span class="c1">Nov 20 2:20:30.757 PM</span><span class="c2">info</span><span class="c3">2025-10-22 10:15:07 status not-installed libjbig0:amd64 &lt;none&gt;</span></div><div class="r" style="top:200px"><svg viewBox="0 0 16 16" fill="currentColor"><path fill-rule="evenodd" d="M4.646 1.646a.5.5 0 0 1 .708 0l6 6a.5.5 0 0 1 0 .708l-6 6a.5.5 0 0 1-.708-.708L10.293 8 4.646 2.354a.5.5 0 0 1 0-.708z"/></svg><i></i><span class="c1">Nov 20 2:20:30.758 PM</span><span class="c2">info</span><span class="c3">2025-10-22 10:15:07 status installed libjpeg8:amd64 8c-2ubuntu11</span></div><div class="r" style="top:220px"><svg viewBox="0 0 16 16" fill="currentColor"><path fill-rule="evenodd" d="M4.646 1.646a.5.5 0 0 1 .708 0l6 6a.5.5 0 0 1 0 .708l-6 6a.5.5 0 0 1-.708-.708L10.293 8 4.646 2.354a.5.5 0 0 1 0-.708z"/></svg><i></i><span class="c1">Nov 20 2:20:30.758 PM</span><span class="c2">info</span><span class="c3">2025-10-22 10:15:07 remove libjpeg8:amd64 8c-2ubuntu11 &lt;none&gt;</span></div><div class="r" style="top:240px"><svg viewBox="0 0 16 16" fill="currentColor"><path fill-rule="evenodd" d="M4.646 1.646a.5.5 0 0 1 .708 0l6 6a.5.5 0 0 1 0 .708l-6 6a.5.5 0 0 1-.708-.708L10.293 8 4.646 2.354a.5.5 0 0 1 0-.708z"/></svg><i></i><span class="c1">Nov 20 2:20:30.758 PM</span><span class="c2">info</span><span class="c3">2025-10-22 10:15:07 status half-configured libjpeg8:amd64 8c-2ubuntu11</span></div><div class="r" style="top:260px"><svg viewBox="0 0 16 16" fill="currentColor"><path fill-rule="evenodd" d="M4.646 1.646a.5.5 0 0 1 .708 0l6 6a.5.5 0 0 1 0 .708l-6 6a.5.5 0 0 1-.708-.708L10.293 8 4.646 2.354a.5.5 0 0 1 0-.708z"/></svg><i></i><span class="c1">Nov 20 2:20:30.758 PM</span><span class="c2">info</span><span class="c3">2025-10-22 10:15:07 status half-installed libjpeg8:amd64 8c-2ubuntu11</span></div><div class="r" style="top:280px"><svg viewBox="0 0 16 16" fill="currentColor"><path fill-rule="evenodd" d="M4.646 1.646a.5.5 0 0 1 .708 0l6 6a.5.5 0 0 1 0 .708l-6 6a.5.5 0 0 1-.708-.708L10.293 8 4.646 2.354a.5.5 0 0 1 0-.708z"/></svg><i></i><span class="c1">Nov 20 2:20:30.758 PM</span><span class="c2">info</span><span class="c3">2025-10-22 10:15:07 status config-files libjpeg8:amd64 8c-2ubuntu11</span></div><div class="r" style="top:300px"><svg viewBox="0 0 16 16" fill="currentColor"><path fill-rule="evenodd" d="M4.646 1.646a.5.5 0 0 1 .708 0l6 6a.5.5 0 0 1 0 .708l-6 6a.5.5 0 0 1-.708-.708L10.293 8 4.646 2.354a.5.5 0 0 1 0-.708z"/></svg><i></i><span class="c1">Nov 20 2:20:30.758 PM</span><span class="c2">info</span><span class="c3">2025-10-22 10:15:07 status not-installed libjpeg8:amd64 &lt;none&gt;</span></div><div class="r" style="top:320px"><svg viewBox="0 0 16 16" fill="currentColor"><path fill-rule="evenodd" d="M4.646 1.646a.5.5 0 0 1 .708 0l6 6a.5.5 0 0 1 0 .708l-6 6a.5.5 0 0 1-.708-.708L10.293 8 4.646 2.354a.5.5 0 0 1 0-.708z"/></svg><i></i><span class="c1">Nov 20 2:20:30.758 PM</span><span class="c2">info</span><span class="c3">2025-10-22 10:15:07 status installed libjpeg-turbo8:amd64 2.1.5-2ubuntu2</span></div><div class="r" style="top:340px"><svg viewBox="0 0 16 16" fill="currentColor"><path fill-rule="evenodd" d="M4.646 1.646a.5.5 0 0 1 .708 0l6 6a.5.5 0 0 1 0 .708l-6 6a.5.5 0 0 1-.708-.708L10.293 8 4.646 2.354a.5.5 0 0 1 0-.708z"/></svg><i></i><span class="c1">Nov 20 2:20:30.758 PM</span><span class="c2">info</span><span class="c3">2025-10-22 10:15:07 remove libjpeg-turbo8:amd64 2.1.5-2ubuntu2 &lt;none&gt;</span></div><div class="r" style="top:360px"><svg viewBox="0 0 16 16" fill="currentColor"><path fill-rule="evenodd" d="M4.646 1.646a.5.5 0 0 1 .708 0l6 6a.5.5 0 0 1 0 .708l-6 6a.5.5 0 0 1-.708-.708L10.293 8 4.646 2.354a.5.5 0 0 1 0-.708z"/></svg><i></i><span class="c1">Nov 20 2:20:30.758 PM</span><span class="c2">info</span><span class="c3">2025-10-22 10:15:07 status half-configured libjpeg-turbo8:amd64 2.1.5-2ubuntu2</span></div><div class="r" style="top:380px"><svg viewBox="0 0 16 16" fill="currentColor"><path fill-rule="evenodd" d="M4.646 1.646a.5.5 0 0 1 .708 0l6 6a.5.5 0 0 1 0 .708l-6 6a.5.5 0 0 1-.708-.708L10.293 8 4.646 2.354a.5.5 0 0 1 0-.708z"/></svg><i></i><span class="c1">Nov 20 2:20:30.758 PM</span><span class="c2">info</span><span class="c3">2025-10-22 10:15:07 status half-installed libjpeg-turbo8:amd64 2.1.5-2ubuntu2</span></div><div class="r" style="top:400px"><svg viewBox="0 0 16 16" fill="currentColor"><path fill-rule="evenodd" d="M4.646 1.646a.5.5 0 0 1 .708 0l6 6a.5.5 0 0 1 0 .708l-6 6a.5.5 0 0 1-.708-.708L10.293 8 4.646 2.354a.5.5 0 0 1 0-.708z"/></svg><i></i><span class="c1">Nov 20 2:20:30.758 PM</span><span class="c2">info</span><span class="c3">2025-10-22 10:15:07 status config-files libjpeg-turbo8:amd64 2.1.5-2ubuntu2</span></div><div class="r" style="top:420px"><svg viewBox="0 0 16 16" fill="currentColor"><path fill-rule="evenodd" d="M4.646 1.646a.5.5 0 0 1 .708 0l6 6a.5.5 0 0 1 0 .708l-6 6a.5.5 0 0 1-.708-.708L10.293 8 4.646 2.354a.5.5 0 0 1 0-.708z"/></svg><i></i><span class="c1">Nov 20 2:20:30.758 PM</span><span class="c2">info</span><span class="c3">2025-10-22 10:15:07 status not-installed libjpeg-turbo8:amd64 &lt;none&gt;</span></div><div class="r" style="top:440px"><svg viewBox="0 0 16 16" fill="currentColor"><path fill-rule="evenodd" d="M4.646 1.646a.5.5 0 0 1 .708 0l6 6a.5.5 0 0 1 0 .708l-6 6a.5.5 0 0 1-.708-.708L10.293 8 4.646 2.354a.5.5 0 0 1 0-.708z"/></svg><i></i><span class="c1">Nov 20 2:20:30.758 PM</span><span class="c2">info</span><span class="c3">2025-10-22 10:15:07 status installed liblerc4:amd64 4.0.0+ds-4ubuntu2</span></div><div class="r" style="top:460px"><svg viewBox="0 0 16 16" fill="currentColor"><path fill-rule="evenodd" d="M4.646 1.646a.5.5 0 0 1 .708 0l6 6a.5.5 0 0 1 0 .708l-6 6a.5.5 0 0 1-.708-.708L10.293 8 4.646 2.354a.5.5 0 0 1 0-.708z"/></svg><i></i><span class="c1">Nov 20 2:20:30.758 PM</span><span class="c2">info</span><span class="c3">2025-10-22 10:15:07 remove liblerc4:amd64 4.0.0+ds-4ubuntu2 &lt;none&gt;</span></div><div class="r" style="top:480px"><svg viewBox="0 0 16 16" fill="currentColor"><path fill-rule="evenodd" d="M4.646 1.646a.5.5 0 0 1 .708 0l6 6a.5.5 0 0 1 0 .708l-6 6a.5.5 0 0 1-.708-.708L10.293 8 4.646 2.354a.5.5 0 0 1 0-.708z"/></svg><i></i><span class="c1">Nov 20 2:20:30.758 PM</span><span class="c2">info</span><span class="c3">2025-10-22 10:15:07 status half-configured liblerc4:amd64 4.0.0+ds-4ubuntu2</span></div><div class="r" style="top:500px"><svg viewBox="0 0 16 16" fill="currentColor"><path fill-rule="evenodd" d="M4.646 1.646a.5.5 0 0 1 .708 0l6 6a.5.5 0 0 1 0 .708l-6 6a.5.5 0 0 1-.708-.708L10.293 8 4.646 2.354a.5.5 0 0 1 0-.708z"/></svg><i></i><span class="c1">Nov 20 2:20:30.758 PM</span><span class="c2">info</span><span class="c3">2025-10-22 10:15:07 status half-installed liblerc4:amd64 4.0.0+ds-4ubuntu2</span></div><div class="r" style="top:520px"><svg viewBox="0 0 16 16" fill="currentColor"><path fill-rule="evenodd" d="M4.646 1.646a.5.5 0 0 1 .708 0l6 6a.5.5 0 0 1 0 .708l-6 6a.5.5 0 0 1-.708-.708L10.293 8 4.646 2.354a.5.5 0 0 1 0-.708z"/></svg><i></i><span class="c1">Nov 20 2:20:30.758 PM</span><span class="c2">info</span><span class="c3">2025-10-22 10:15:07 status config-files liblerc4:amd64 4.0.0+ds-4ubuntu2</span></div><div class="r" style="top:540px"><svg viewBox="0 0 16 16" fill="currentColor"><path fill-rule="evenodd" d="M4.646 1.646a.5.5 0 0 1 .708 0l6 6a.5.5 0 0 1 0 .708l-6 6a.5.5 0 0 1-.708-.708L10.293 8 4.646 2.354a.5.5 0 0 1 0-.708z"/></svg><i></i><span class="c1">Nov 20 2:20:30.758 PM</span><span class="c2">info</span><span class="c3">2025-10-22 10:15:07 status not-installed liblerc4:amd64 &lt;none&gt;</span></div><div class="r" style="top:560px"><svg viewBox="0 0 16 16" fill="currentColor"><path fill-rule="evenodd" d="M4.646 1.646a.5.5 0 0 1 .708 0l6 6a.5.5 0 0 1 0 .708l-6 6a.5.5 0 0 1-.708-.708L10.293 8 4.646 2.354a.5.5 0 0 1 0-.708z"/></svg><i></i><span class="c1">Nov 20 2:20:30.758 PM</span><span class="c2">info</span><span class="c3">2025-10-22 10:15:07 status installed libwebp7:amd64 1.3.2-0.4build3</span></div><div class="r" style="top:580px"><svg viewBox="0 0 16 16" fill="currentColor"><path fill-rule="evenodd" d="M4.646 1.646a.5.5 0 0 1 .708 0l6 6a.5.5 0 0 1 0 .708l-6 6a.5.5 0 0 1-.708-.708L10.293 8 4.646 2.354a.5.5 0 0 1 0-.708z"/></svg><i></i><span class="c1">Nov 20 2:20:30.758 PM</span><span class="c2">info</span><span class="c3">2025-10-22 10:15:07 remove libwebp7:amd64 1.3.2-0.4build3 &lt;none&gt;</span></div><div class="r" style="top:600px"><svg viewBox="0 0 16 16" fill="currentColor"><path fill-rule="evenodd" d="M4.646 1.646a.5.5 0 0 1 .708 0l6 6a.5.5 0 0 1 0 .708l-6 6a.5.5 0 0 1-.708-.708L10.293 8 4.646 2.354a.5.5 0 0 1 0-.708z"/></svg><i></i><span class="c1">Nov 20 2:20:30.758 PM</span><span class="c2">info</span><span class="c3">2025-10-22 10:15:07 status half-configured libwebp7:amd64 1.3.2-0.4build3</span></div><div class="r" style="top:620px"><svg viewBox="0 0 16 16" fill="currentColor"><path fill-rule="evenodd" d="M4.646 1.646a.5.5 0 0 1 .708 0l6 6a.5.5 0 0 1 0 .708l-6 6a.5.5 0 0 1-.708-.708L10.293 8 4.646 2.354a.5.5 0 0 1 0-.708z"/></svg><i></i><span class="c1">Nov 20 2:20:30.758 PM</span><span class="c2">info</span><span class="c3">2025-10-22 10:15:07 status half-installed libwebp7:amd64 1.3.2-0.4build3</span></div></div>
</div>
</body></html>
